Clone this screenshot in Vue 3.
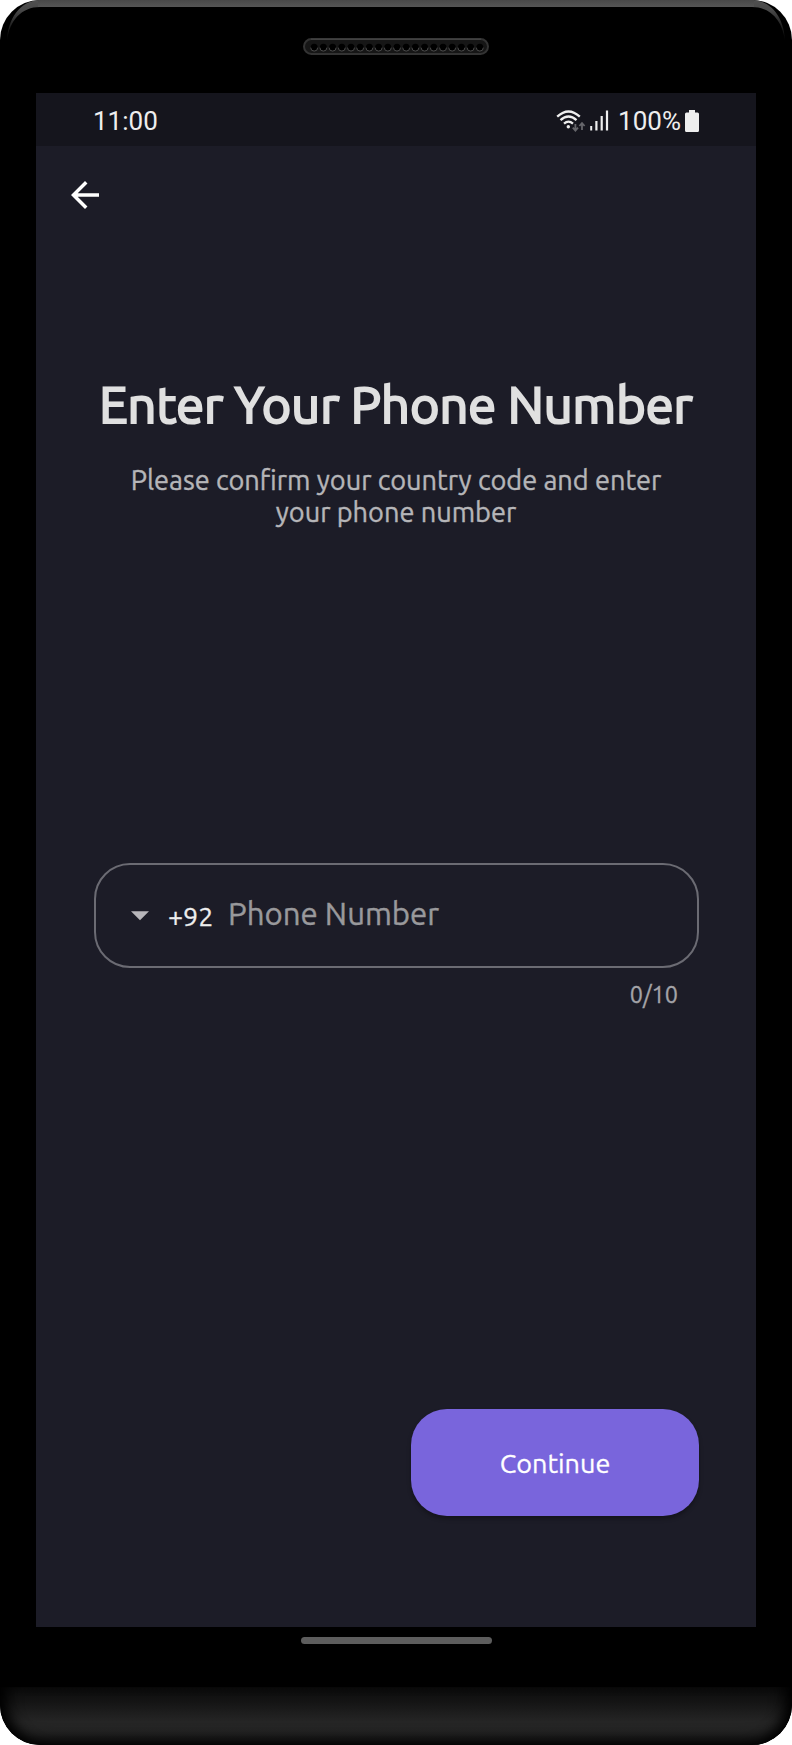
<script setup>
import { ref } from 'vue'

const phone = ref('')
const dialCode = ref('+92')
const maxDigits = 10
const holes = Array.from({ length: 19 }, (_, i) => 11.2 + i * 9.2)
</script>

<template>
  <div class="device">
    <svg class="rim" width="792" height="46" viewBox="0 0 792 46" aria-hidden="true">
      <defs>
        <linearGradient id="rimTone" x1="0" y1="0" x2="0" y2="7" gradientUnits="userSpaceOnUse">
          <stop offset="0" stop-color="#484848" />
          <stop offset="1" stop-color="#555" />
        </linearGradient>
        <linearGradient id="rimFade" x1="0" y1="0" x2="0" y2="42" gradientUnits="userSpaceOnUse">
          <stop offset="0" stop-color="#505050" />
          <stop offset="0.25" stop-color="#484848" />
          <stop offset="0.6" stop-color="#222" />
          <stop offset="1" stop-color="#000" />
        </linearGradient>
      </defs>
      <path d="M7 42C7 20 20 0 40 0H752C772 0 785 20 785 42C783 20 770 7 752 7H40C22 7 9 20 7 42Z" fill="url(#rimFade)" />
      <path d="M38 0H754V7H38Z" fill="url(#rimTone)" />
    </svg>

    <header class="bezel">
      <svg class="speaker" width="186" height="18" viewBox="0 0 186 18" aria-hidden="true">
        <rect x="1" y="1" width="184" height="15" rx="7.5" fill="#161616" stroke="#333" stroke-width="2" />
        <path d="M8 1.2H178" stroke="#414141" stroke-width="1.6" />
        <g v-for="x in holes" :key="x">
          <circle :cx="x" cy="9.2" r="3.5" fill="#000" />
          <path :d="`M${x - 3.5} 9.6a3.5 3.5 0 0 0 7 0`" fill="none" stroke="#4a4a4a" stroke-width="1" />
        </g>
      </svg>
    </header>

    <main class="screen">
      <div class="status">
        <span class="clock">11:00</span>
        <div class="indicators">
          <svg class="wifi" width="30" height="24" viewBox="0 0 30 24" fill="none" stroke="#eee" stroke-width="2.3">
            <path d="M1.2 7.7Q12.5-2.7 23.8 7.7" />
            <path d="M4.5 11.2Q12.5 3.8 20.5 11.2" />
            <path d="M8 14.6Q12.5 10.6 17 14.6" />
            <circle cx="12.3" cy="17.8" r="1.7" fill="#eee" stroke="none" />
            <path d="M19.4 15V21.5M16.8 18.7L19.4 21.7L22 18.7" stroke="#66666b" stroke-width="1.8" />
            <path d="M26 21V14.2M23.4 17L26 14L28.6 17" stroke="#66666b" stroke-width="1.8" />
          </svg>
          <svg class="signal" width="19" height="21" viewBox="0 0 19 21" fill="#eee">
            <rect x="0.2" y="16" width="2" height="4.5" />
            <rect x="5.3" y="11" width="2.2" height="9.5" />
            <rect x="10.6" y="6" width="2.2" height="14.5" />
            <rect x="15.9" y="0.5" width="2.2" height="20" />
          </svg>
          <span class="percent">100%</span>
          <svg class="battery" width="14" height="22" viewBox="0 0 14 22" fill="#eee">
            <path d="M4 0H10V2.5H12.5Q14 2.5 14 4V20.5Q14 22 12.5 22H1.5Q0 22 0 20.5V4Q0 2.5 1.5 2.5H4Z" />
          </svg>
        </div>
      </div>

      <button class="back" type="button" aria-label="Back">
        <svg width="28" height="28" viewBox="4 4 16 16" fill="#fff">
          <path d="M20 11H7.83l5.59-5.59L12 4l-8 8 8 8 1.41-1.41L7.83 13H20v-2z" />
        </svg>
      </button>

      <h1 class="title">Enter Your Phone Number</h1>
      <p class="subtitle">
        <span class="line first">Please confirm your country code and enter</span>
        <span class="line second">your phone number</span>
      </p>

      <div class="field">
        <svg class="caret" width="18" height="10" viewBox="0 0 18 10"><path d="M0 0.3H18L9 9.3Z" fill="#b7b5ba" /></svg>
        <span class="dial">{{ dialCode }}</span>
        <input v-model="phone" class="number" type="tel" :maxlength="maxDigits" placeholder="Phone Number" />
      </div>
      <div class="counter">{{ phone.length }}/{{ maxDigits }}</div>

      <button class="continue" type="button"><span>Continue</span></button>
    </main>

    <div class="nav"><span class="pill"></span></div>
    <footer class="chin"></footer>
  </div>
</template>

<style>
body {
  background: #fff;
}
</style>

<style scoped>
.device {
  position: relative;
  display: flex;
  flex-direction: column;
  width: 792px;
  height: 1745px;
  box-sizing: border-box;
  background: #000;
  border-radius: 40px;
  overflow: hidden;
  font-family: "Ubuntu", "Noto Sans", "Open Sans", sans-serif;
}
.rim {
  position: absolute;
  top: 0;
  left: 0;
}
.bezel {
  display: flex;
  justify-content: center;
  height: 93px;
  flex: none;
}
.speaker {
  margin-top: 38px;
  margin-right: 1px;
}
.screen {
  display: flex;
  flex-direction: column;
  flex: none;
  height: 1534px;
  margin: 0 36px;
  background: #1c1c27;
}
.status {
  display: flex;
  align-items: center;
  justify-content: space-between;
  height: 53px;
  flex: none;
  padding: 0 57px;
  background: #15151d;
  color: #eee;
  font-family: Roboto, sans-serif;
  font-size: 26px;
  line-height: 53px;
}
.clock {
  position: relative;
  top: 2px;
}
.indicators {
  display: flex;
  height: 53px;
}
.wifi {
  margin-top: 16px;
}
.signal {
  margin: 17px 9px 0 4px;
}
.percent {
  padding-top: 2px;
  margin-right: 4px;
}
.battery {
  margin-top: 17px;
}
button {
  border: 0;
  padding: 0;
  font-family: inherit;
}
.back {
  width: 28px;
  height: 28px;
  margin: 35px 0 0 35px;
  background: none;
}
.back svg {
  display: block;
}
.title {
  margin: 161px 0 0;
  height: 70px;
  line-height: 70px;
  font-size: 50.5px;
  font-weight: 400;
  -webkit-text-stroke: 2.2px currentColor;
  color: #e0e0e0;
  text-align: center;
  white-space: nowrap;
}
.subtitle {
  display: flex;
  flex-direction: column;
  margin: 24px 0 0;
  color: #b5b5b8;
  font-size: 27.15px;
  line-height: 32px;
  text-align: center;
  -webkit-text-stroke: 0.4px currentColor;
}
.field {
  display: flex;
  align-items: center;
  box-sizing: border-box;
  width: 605px;
  height: 105px;
  margin: 335px 0 0 58px;
  padding-left: 35px;
  border: 2px solid #6b6b73;
  border-radius: 36px;
}
.dial {
  width: 60px;
  margin-left: 19px;
  padding-top: 0;
  color: #eee;
  font-size: 26.8px;
  -webkit-text-stroke: 0.3px currentColor;
}
.number {
  width: 400px;
  height: 60px;
  padding: 0 0 4px;
  border: 0;
  outline: 0;
  background: none;
  color: #eee;
  font-family: inherit;
  font-size: 31.2px;
  -webkit-text-stroke: 0.4px currentColor;
}
.number::placeholder {
  color: #99999c;
  opacity: 1;
}
.counter {
  margin: 10px 78px 0 0;
  height: 32px;
  line-height: 32px;
  color: #a4a4a8;
  font-size: 23.4px;
  -webkit-text-stroke: 0.3px currentColor;
  text-align: right;
}
.continue {
  align-self: flex-end;
  width: 288px;
  height: 107px;
  margin: 399px 57px 0 0;
  border-radius: 36px;
  background: #7965dc;
  box-shadow: 0 3px 4px rgba(0, 0, 0, 0.3);
  color: #fff;
  font-size: 27px;
  -webkit-text-stroke: 0.3px currentColor;
}
.nav {
  display: flex;
  justify-content: center;
  height: 60px;
  flex: none;
}
.pill {
  width: 191px;
  height: 7px;
  margin-top: 10px;
  border-radius: 4px;
  background: #5d5d5d;
}
.chin {
  flex: 1;
  border-radius: 0 0 40px 40px;
  background: linear-gradient(#0c0c0c, #141414 25%, #252525 60%, #262626);
  box-shadow: inset 0 -8px 14px -2px #000, inset 16px 0 16px -10px #000, inset -16px 0 16px -10px #000;
}
</style>
